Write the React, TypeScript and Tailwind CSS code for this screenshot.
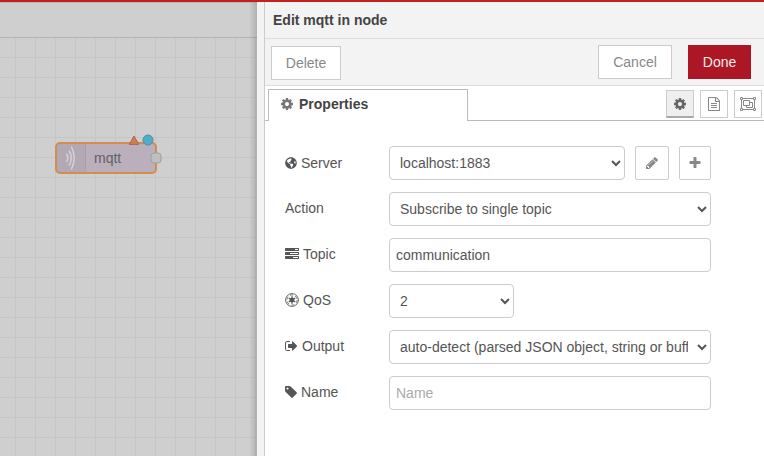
import React from "react";
import { FaGlobeAmericas } from "react-icons/fa";

const COG =
  "M1152 896q0-106-75-181t-181-75-181 75-75 181 75 181 181 75 181-75 75-181zm512-109v222q0 12-8 23t-20 13l-185 28q-19 54-39 91 35 50 107 138 10 12 10 25t-9 23q-27 37-99 108t-94 71q-12 0-26-9l-138-108q-44 23-91 38-16 136-29 186-7 28-36 28h-222q-14 0-24.5-8.5t-11.5-21.5l-28-184q-49-16-90-37l-141 107q-10 9-25 9-14 0-25-11-126-114-165-168-7-10-7-23 0-12 8-23 15-21 51-66.5t54-70.5q-27-50-41-99l-183-27q-13-2-21-12.5t-8-23.5v-222q0-12 8-23t19-13l186-28q14-46 39-92-40-57-107-138-10-12-10-24 0-10 9-23 26-36 98.5-107.5t94.5-71.5q13 0 26 10l138 107q44-23 91-38 16-136 29-186 7-28 36-28h222q14 0 24.5 8.5t11.5 21.5l28 184q49 16 90 37l142-107q9-9 24-9 13 0 25 10 129 119 165 170 7 8 7 22 0 12-8 23-15 21-51 66.5t-54 70.5q26 50 41 98l183 28q13 2 21 12.5t8 23.5z";
const PLUS =
  "M1600 736v192q0 40-28 68t-68 28h-416v416q0 40-28 68t-68 28h-192q-40 0-68-28t-28-68v-416h-416q-40 0-68-28t-28-68v-192q0-40 28-68t68-28h416v-416q0-40 28-68t68-28h192q40 0 68 28t28 68v416h416q40 0 68 28t28 68z";
const PENCIL =
  "M491 1536l91-91-235-235-91 91v107h128v128h107zm523-928q0-22-22-22-10 0-17 7l-542 542q-7 7-7 17 0 22 22 22 10 0 17-7l542-542q7-7 7-17zm-54-192l416 416-832 832h-416v-416zm683 96q0 53-37 90l-166 166-416-416 166-165q36-38 90-38 53 0 91 38l235 234q37 39 37 91z";
const TAG =
  "M576 448q0-53-37.5-90.5t-90.5-37.5-90.5 37.5-37.5 90.5 37.5 90.5 90.5 37.5 90.5-37.5 37.5-90.5zm1067 576q0 53-37 90l-491 492q-39 37-91 37-53 0-90-37l-715-716q-38-37-64.5-101t-26.5-117v-416q0-52 38-90t90-38h416q53 0 117 26.5t102 64.5l715 714q37 39 37 91z";
const SIGN_OUT =
  "M704 1440q0 4 1 20t.5 26.5-3 23.5-10 19.5-20.5 6.5h-320q-119 0-203.5-84.5t-84.5-203.5v-704q0-119 84.5-203.5t203.5-84.5h320q13 0 22.5 9.5t9.5 22.5q0 4 1 20t.5 26.5-3 23.5-10 19.5-20.5 6.5h-320q-66 0-113 47t-47 113v704q0 66 47 113t113 47h312l11.5 1 11.5 3 8 5.5 7 9 2 13.5zm928-544q0 26-19 45l-544 544q-19 19-45 19t-45-19-19-45v-288h-448q-26 0-45-19t-19-45v-384q0-26 19-45t45-19h448v-288q0-26 19-45t45-19 45 19l544 544q19 19 19 45z";
const TASKS =
  "M1024 1408h640v-128h-640v128zm-384-512h1024v-128h-1024v128zm640-512h384v-128h-384v128zm512 832v256q0 26-19 45t-45 19h-1664q-26 0-45-19t-19-45v-256q0-26 19-45t45-19h1664q26 0 45 19t19 45zm0-512v256q0 26-19 45t-45 19h-1664q-26 0-45-19t-19-45v-256q0-26 19-45t45-19h1664q26 0 45 19t19 45zm0-512v256q0 26-19 45t-45 19h-1664q-26 0-45-19t-19-45v-256q0-26 19-45t45-19h1664q26 0 45 19t19 45z";
const FILE_TEXT =
  "M1596 380q28 28 48 76t20 88v1152q0 40-28 68t-68 28h-1344q-40 0-68-28t-28-68v-1600q0-40 28-68t68-28h896q40 0 88 20t76 48zm-444-244v376h376q-10-29-22-41l-313-313q-12-12-41-22zm384 1528v-1024h-416q-40 0-68-28t-28-68v-416h-768v1536h1280zm-1024-864q0-14 9-23t23-9h704q14 0 23 9t9 23v64q0 14-9 23t-23 9h-704q-14 0-23-9t-9-23v-64zm736 224q14 0 23 9t9 23v64q0 14-9 23t-23 9h-704q-14 0-23-9t-9-23v-64q0-14 9-23t23-9h704zm0 256q14 0 23 9t9 23v64q0 14-9 23t-23 9h-704q-14 0-23-9t-9-23v-64q0-14 9-23t23-9h704z";

function Glyph({ d, viewBox = "0 0 1792 1792", className = "size-3.5" }: { d: string; viewBox?: string; className?: string }) {
  return (
    <svg viewBox={viewBox} className={`shrink-0 ${className}`} fill="currentColor">
      <path d={d} />
    </svg>
  );
}

function ObjectGroup() {
  return (
    <svg width="16" height="14" viewBox="0 0 16 14" fill="none" stroke="currentColor">
      <path d="M3 1.500h10M3 12.500h10M1.500 3v8M14.500 3v8" />
      <path d="M.5.5h2v2h-2zM13.500.5h2v2h-2zM.5 11.500h2v2h-2zM13.500 11.500h2v2h-2z" />
      <path d="M3.500 3.500h6v5h-6zM9.500 5.500h3v5h-6v-2" />
    </svg>
  );
}

const SPOKES = [0, 60, 120, 180, 240, 300];

function Empire() {
  return (
    <svg viewBox="-7 -7 14 14" className="size-3.5 shrink-0" fill="none" stroke="currentColor">
      <circle r="6.4" strokeWidth="0.9" />
      <circle r="5.1" strokeWidth="0.8" strokeDasharray="3.2 2.14" />
      <circle r="2.3" fill="currentColor" stroke="none" />
      {SPOKES.map((angle) => (
        <path key={angle} d="M0 0v-3.700" strokeWidth="1.400" transform={`rotate(${angle})`} />
      ))}
    </svg>
  );
}

function Workspace() {
  return (
    <div className="relative h-full w-[257px] shrink-0 overflow-hidden bg-[#cfcfcf]">
      <div className="h-9 border-b border-t border-b-[#b4b4b4] border-t-[#bababa]" />
      <svg className="block" width="257" height="418" viewBox="0 38 257 418">
        <defs>
          <pattern id="grid" x="15" y="57" width="20" height="20" patternUnits="userSpaceOnUse">
            <path d="M.5 0v20M0 .5h20" stroke="#c6c6c6" />
          </pattern>
        </defs>
        <rect y="38" width="257" height="418" fill="url(#grid)" />
        <rect x="56" y="143" width="100" height="30" rx="4" fill="#bbafbb" />
        <path d="M60 143h25v30H60a4 4 0 0 1-4-4v-22a4 4 0 0 1 4-4z" fill="#b3a8b4" />
        <path d="M85.500 144v28" stroke="#a99fab" />
        <rect x="56" y="143" width="100" height="30" rx="4" fill="none" stroke="#d38d4e" strokeWidth="2" />
        <g fill="none" stroke="#d6d2d6" strokeWidth="1.500">
          <path d="M66.500 154q2.600 4 0 8" />
          <path d="M69 150.500q4.600 7.500 0 15" />
          <path d="M71.300 146.500q5.800 11.500 0 23" />
        </g>
        <text x="94" y="163" fontSize="14" fill="#636066" fontFamily="Liberation Sans, Arial, sans-serif">
          mqtt
        </text>
        <rect x="151" y="153" width="10" height="10" rx="3" fill="#bfbfbf" stroke="#a0a0a0" />
        <path d="M134 136l4.700 8.400h-9.400z" fill="#d0804a" stroke="#b06058" />
        <circle cx="148" cy="140" r="5" fill="#50abcd" stroke="#4792ac" />
      </svg>
      <div className="absolute inset-y-0 right-0 w-2 bg-gradient-to-r from-transparent to-black/15" />
    </div>
  );
}

function Row({
  icon,
  label,
  labelHeight = "h-8",
  children,
}: {
  icon?: React.ReactNode;
  label: string;
  labelHeight?: string;
  children: React.ReactNode;
}) {
  return (
    <div className="flex h-[34px] items-start">
      <label className={`flex w-[104px] shrink-0 items-center gap-1 ${labelHeight}`}>
        {icon}
        <span>{label}</span>
      </label>
      {children}
    </div>
  );
}

const field = "h-[34px] rounded border border-[#ccc] bg-white px-1.5 text-sm text-[#555]";
const squareButton = "flex h-[34px] items-center justify-center rounded-[2px] border border-[#ccc] bg-white text-[#888]";
const tabButton = "flex size-7 items-center justify-center border border-[#ccc] bg-white text-[#888]";

export default function App() {
  return (
    <div className="flex h-[456px] w-[764px] flex-col overflow-hidden bg-white font-['Liberation_Sans',Arial,sans-serif] text-sm text-[#555]">
      <div className="h-0.5 shrink-0 bg-[#c42020]" />
      <div className="flex min-h-0 flex-1">
        <Workspace />
        <div className="w-2 shrink-0 border-r border-[#ccc] bg-[#f3f3f3]" />
        <main className="flex min-w-0 flex-1 flex-col">
          <div className="flex h-[37px] shrink-0 items-center border-b border-[#ddd] bg-[#f3f3f3] pl-2 font-bold text-[#444]">
            Edit mqtt in node
          </div>
          <div className="flex h-[47px] shrink-0 items-start border-b border-[#ddd] bg-[#f3f3f3] pl-1.5 pr-[13px] pt-1.5">
            <button className="mt-px h-[34px] w-[70px] border border-[#ccc] bg-white text-[#888]">Delete</button>
            <button className="ml-auto h-[34px] w-[74px] border border-[#ccc] bg-white text-[#888]">Cancel</button>
            <button className="ml-4 h-[34px] w-[63px] bg-[#ad1625] text-[#eee]">Done</button>
          </div>
          <div className="flex h-[35px] shrink-0 items-end">
            <div className="w-[3px] border-b border-[#bbb]" />
            <div className="flex h-8 w-[200px] items-center gap-[5px] border border-b-0 border-[#bbb] pb-[3px] pl-[11px] font-bold text-[#444]">
              <Glyph d={COG} className="size-3.5 text-[#777]" />
              Properties
            </div>
            <div className="flex h-8 flex-1 items-start justify-end gap-1.5 border-b border-[#bbb] pr-0.5 pt-px">
              <button className="flex size-7 items-center justify-center border border-b-2 border-[#ccc] border-b-[#aaa] bg-[#efefef] text-[#666]">
                <Glyph d={COG} />
              </button>
              <button className={tabButton}>
                <Glyph d={FILE_TEXT} />
              </button>
              <button className={tabButton}>
                <ObjectGroup />
              </button>
            </div>
          </div>
          <form className="flex flex-col gap-3 pl-5 pt-[25px]">
            <Row icon={<FaGlobeAmericas className="size-3" />} label="Server" labelHeight="h-[34px]">
              <select className={`${field} w-[236px]`}>
                <option>localhost:1883</option>
              </select>
              <button type="button" className={`${squareButton} ml-2.5 w-[34px]`}>
                <Glyph d={PENCIL} />
              </button>
              <button type="button" className={`${squareButton} ml-2.5 w-8`}>
                <Glyph d={PLUS} />
              </button>
            </Row>
            <Row label="Action">
              <select className={`${field} w-[322px]`}>
                <option>Subscribe to single topic</option>
              </select>
            </Row>
            <Row icon={<Glyph d={TASKS} />} label="Topic">
              <input className={`${field} w-[322px]`} defaultValue="communication" />
            </Row>
            <Row icon={<Empire />} label="QoS">
              <select className={`${field} w-[125px]`}>
                <option>2</option>
              </select>
            </Row>
            <Row icon={<Glyph d={SIGN_OUT} viewBox="64 0 1664 1792" className="h-3.5 w-[13px]" />} label="Output">
              <select className={`${field} w-[322px]`}>
                <option>auto-detect (parsed JSON object, string or buffer)</option>
              </select>
            </Row>
            <Row icon={<Glyph d={TAG} viewBox="128 0 1536 1792" className="h-3.5 w-3" />} label="Name">
              <input className={`${field} w-[322px] placeholder:text-[#aaa]`} placeholder="Name" />
            </Row>
          </form>
        </main>
      </div>
    </div>
  );
}
